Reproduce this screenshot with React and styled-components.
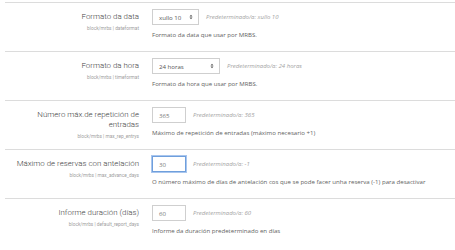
import React from "react";
import styled, { createGlobalStyle } from "styled-components";

const Global = createGlobalStyle`
  html, body {
    margin: 0;
    padding: 0;
    background: #fff;
  }
  body {
    font-family: "Open Sans", "Liberation Sans", sans-serif;
  }
`;

const Page = styled.div`
  padding: 2px 0 0 5px;
  width: 450px;
`;

const Row = styled.div`
  display: grid;
  grid-template-columns: 134px 1fr;
  column-gap: 13px;
  height: 49px;
  box-sizing: border-box;
  border-top: 1px solid #dcdcdc;
  padding-top: 6px;
`;

const LabelCol = styled.div`
  text-align: right;
  padding: 3px 0 0 10px;
`;

const Title = styled.div`
  font-family: Roboto, "Liberation Sans", sans-serif;
  font-weight: 300;
  font-size: 7.9px;
  line-height: 10px;
  color: #3f3f3f;
`;

const Sub = styled.div`
  font-family: Roboto, "Liberation Sans", sans-serif;
  font-size: 4.8px;
  line-height: 6px;
  color: #a0a0a0;
  margin-top: 4px;
`;

const FieldCol = styled.div`
  display: flex;
  flex-direction: column;
`;

const Control = styled.div`
  display: flex;
  align-items: center;
  gap: 7px;
  height: 16px;
`;

const Select = styled.div`
  display: flex;
  align-items: center;
  justify-content: space-between;
  box-sizing: border-box;
  width: ${(p) => p.$w}px;
  height: 16px;
  padding: 0 5px 0 6px;
  border: 1px solid #cfcfcf;
  font-size: 6.1px;
  color: #555;
`;

const Input = styled.div`
  display: flex;
  align-items: center;
  box-sizing: border-box;
  width: 34px;
  height: 16px;
  padding-left: 6px;
  border: 1px solid ${(p) => (p.$focus ? "#6f9fdc" : "#cfcfcf")};
  box-shadow: ${(p) => (p.$focus ? "0 0 0 1px #a9c6ee" : "none")};
  font-size: 6.1px;
  color: #777;
`;

const Default = styled.span`
  font-size: 6px;
  font-style: italic;
  color: #a3a3a3;
`;

const Desc = styled.div`
  font-size: 6.1px;
  line-height: 8px;
  color: #626262;
  margin-top: 6px;
  white-space: nowrap;
`;

function Arrows() {
  return (
    <svg width="4" height="6" viewBox="0 0 4 6">
      <path d="M0.5 2.4 L2 0.8 L3.5 2.4 Z M0.5 3.6 L2 5.2 L3.5 3.6 Z" fill="#555" />
    </svg>
  );
}

const settings = [
  {
    title: "Formato da data",
    sub: "block/mrbs | dateformat",
    kind: "select",
    width: 47,
    value: "xullo 10",
    def: "xullo 10",
    desc: "Formato da data que usar por MRBS.",
  },
  {
    title: "Formato da hora",
    sub: "block/mrbs | timeformat",
    kind: "select",
    width: 68,
    value: "24 horas",
    def: "24 horas",
    desc: "Formato da hora que usar por MRBS.",
  },
  {
    title: "Número máx.de repetición de entradas",
    sub: "block/mrbs | max_rep_entrys",
    kind: "input",
    value: "365",
    def: "365",
    desc: "Máximo de repetición de entradas (máximo necesario +1)",
  },
  {
    title: "Máximo de reservas con antelación",
    sub: "block/mrbs | max_advance_days",
    kind: "input",
    focus: true,
    value: "30",
    def: "-1",
    desc: "O número máximo de días de antelación cos que se pode facer unha reserva (-1) para desactivar",
  },
  {
    title: "Informe duración (días)",
    sub: "block/mrbs | default_report_days",
    kind: "input",
    value: "60",
    def: "60",
    desc: "Informe da duración predeterminado en días",
  },
];

export default function App() {
  return (
    <>
      <Global />
      <Page>
        {settings.map((s) => (
          <Row key={s.sub}>
            <LabelCol>
              <Title>{s.title}</Title>
              <Sub>{s.sub}</Sub>
            </LabelCol>
            <FieldCol>
              <Control>
                {s.kind === "select" ? (
                  <Select $w={s.width}>
                    <span>{s.value}</span>
                    <Arrows />
                  </Select>
                ) : (
                  <Input $focus={s.focus}>{s.value}</Input>
                )}
                <Default>Predeterminado/a: {s.def}</Default>
              </Control>
              <Desc>{s.desc}</Desc>
            </FieldCol>
          </Row>
        ))}
      </Page>
    </>
  );
}
